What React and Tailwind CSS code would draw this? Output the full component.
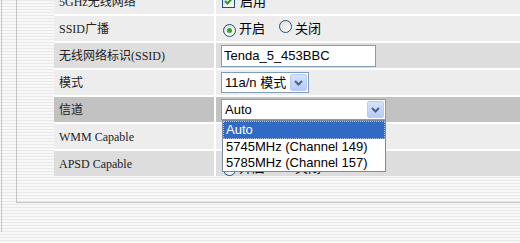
import React from "react";

const serif = { fontFamily: '"Liberation Serif", "Noto Sans CJK SC", serif' };
const sans = { fontFamily: '"Liberation Sans", "Noto Sans CJK SC", sans-serif' };

function Checkbox() {
  return (
    <span className="inline-flex items-center justify-center w-[13px] h-[13px] border border-[#1c5180] bg-gradient-to-br from-[#dcdcd7] to-white">
      <svg width="9" height="9" viewBox="0 0 9 9">
        <path d="M1 4 L3.5 6.5 L8 1.5" stroke="#21a121" strokeWidth="2" fill="none" />
      </svg>
    </span>
  );
}

function Radio({ checked }) {
  return (
    <span className="inline-flex items-center justify-center w-[13px] h-[13px] rounded-full border border-[#1c5180] bg-gradient-to-br from-[#dcdcd7] to-white">
      {checked && <span className="w-[5px] h-[5px] rounded-full bg-[#2fa82f]" />}
    </span>
  );
}

function Radios() {
  return (
    <div className="flex items-center text-[13px] text-black" style={sans}>
      <span className="ml-[2px]"><Radio checked /></span>
      <span className="ml-[3px]">开启</span>
      <span className="ml-[14px]"><Radio /></span>
      <span className="ml-[3px]">关闭</span>
    </div>
  );
}

function Chevron() {
  return (
    <span className="flex items-center justify-center w-[17px] h-[17px] rounded-[2px] border border-[#b9cbf3] bg-gradient-to-b from-[#d6e2fd] to-[#b7cbf7]">
      <svg width="9" height="6" viewBox="0 0 9 6">
        <path d="M1 1 L4.5 4.5 L8 1" stroke="#4d6185" strokeWidth="2" fill="none" />
      </svg>
    </span>
  );
}

function Select({ value, width, open }) {
  return (
    <div className="relative">
      <div
        className="flex items-center justify-between h-[21px] border border-[#7f9db9] bg-white pl-[3px] pr-[1px] text-[13px] text-black"
        style={{ ...sans, width }}
      >
        <span>{value}</span>
        <Chevron />
      </div>
      {open && (
        <div className="absolute left-[1px] top-[21px] w-[164px] border border-[#7a8a99] bg-white text-[13px] text-black leading-[16px] z-10" style={sans}>
          <div className="bg-[#316ac5] text-white pl-[2px] border border-dotted border-[#a8c0ea]">Auto</div>
          <div className="pl-[3px]">5745MHz (Channel 149)</div>
          <div className="pl-[3px]">5785MHz (Channel 157)</div>
        </div>
      )}
    </div>
  );
}

const rows = [
  {
    label: "5GHz无线网络",
    tone: "bg-[#ededed]",
    content: (
      <div className="flex items-center text-[13px]" style={sans}>
        <span className="ml-[1px]"><Checkbox /></span>
        <span className="ml-[5px]">启用</span>
      </div>
    ),
  },
  { label: "SSID广播", tone: "bg-[#ededed]", content: <Radios /> },
  {
    label: "无线网络标识(SSID)",
    tone: "bg-[#dddddd]",
    content: (
      <div className="w-[155px] h-[22px] border border-[#7f9db9] bg-white px-[2px] text-[13px] leading-[20px] text-black" style={sans}>
        Tenda_5_453BBC
      </div>
    ),
  },
  { label: "模式", tone: "bg-[#ededed]", content: <Select value="11a/n 模式" width="88px" /> },
  { label: "信道", tone: "bg-[#c2c2c2] relative z-10", content: <Select value="Auto" width="165px" open /> },
  { label: "WMM Capable", tone: "bg-[#ededed]", content: null },
  {
    label: "APSD Capable",
    tone: "bg-[#dddddd] overflow-hidden",
    content: (
      <div className="pt-[8px]">
        <Radios />
      </div>
    ),
  },
];

export default function App() {
  return (
    <div className="w-[520px] h-[243px] overflow-hidden bg-[repeating-linear-gradient(180deg,#e9e9e9_0px,#e9e9e9_1px,#f8f8f8_1px,#f8f8f8_3px)]">
      <div className="ml-px h-full border-l border-[#c6c6c6] pl-[14px]">
        <div className="h-[214px] border-l border-b border-[#c3c3c3] pl-[37px]">
          <div className="grid grid-cols-[160px_1fr] gap-[2px] bg-white -mt-[11px]">
            {rows.map((r) => (
              <React.Fragment key={r.label}>
                <div className={`h-[25px] flex items-center pl-[5px] text-[12px] text-[#222] ${r.tone}`} style={serif}>
                  {r.label}
                </div>
                <div className={`h-[25px] flex items-center pl-[5px] ${r.tone}`}>{r.content}</div>
              </React.Fragment>
            ))}
          </div>
        </div>
      </div>
    </div>
  );
}
